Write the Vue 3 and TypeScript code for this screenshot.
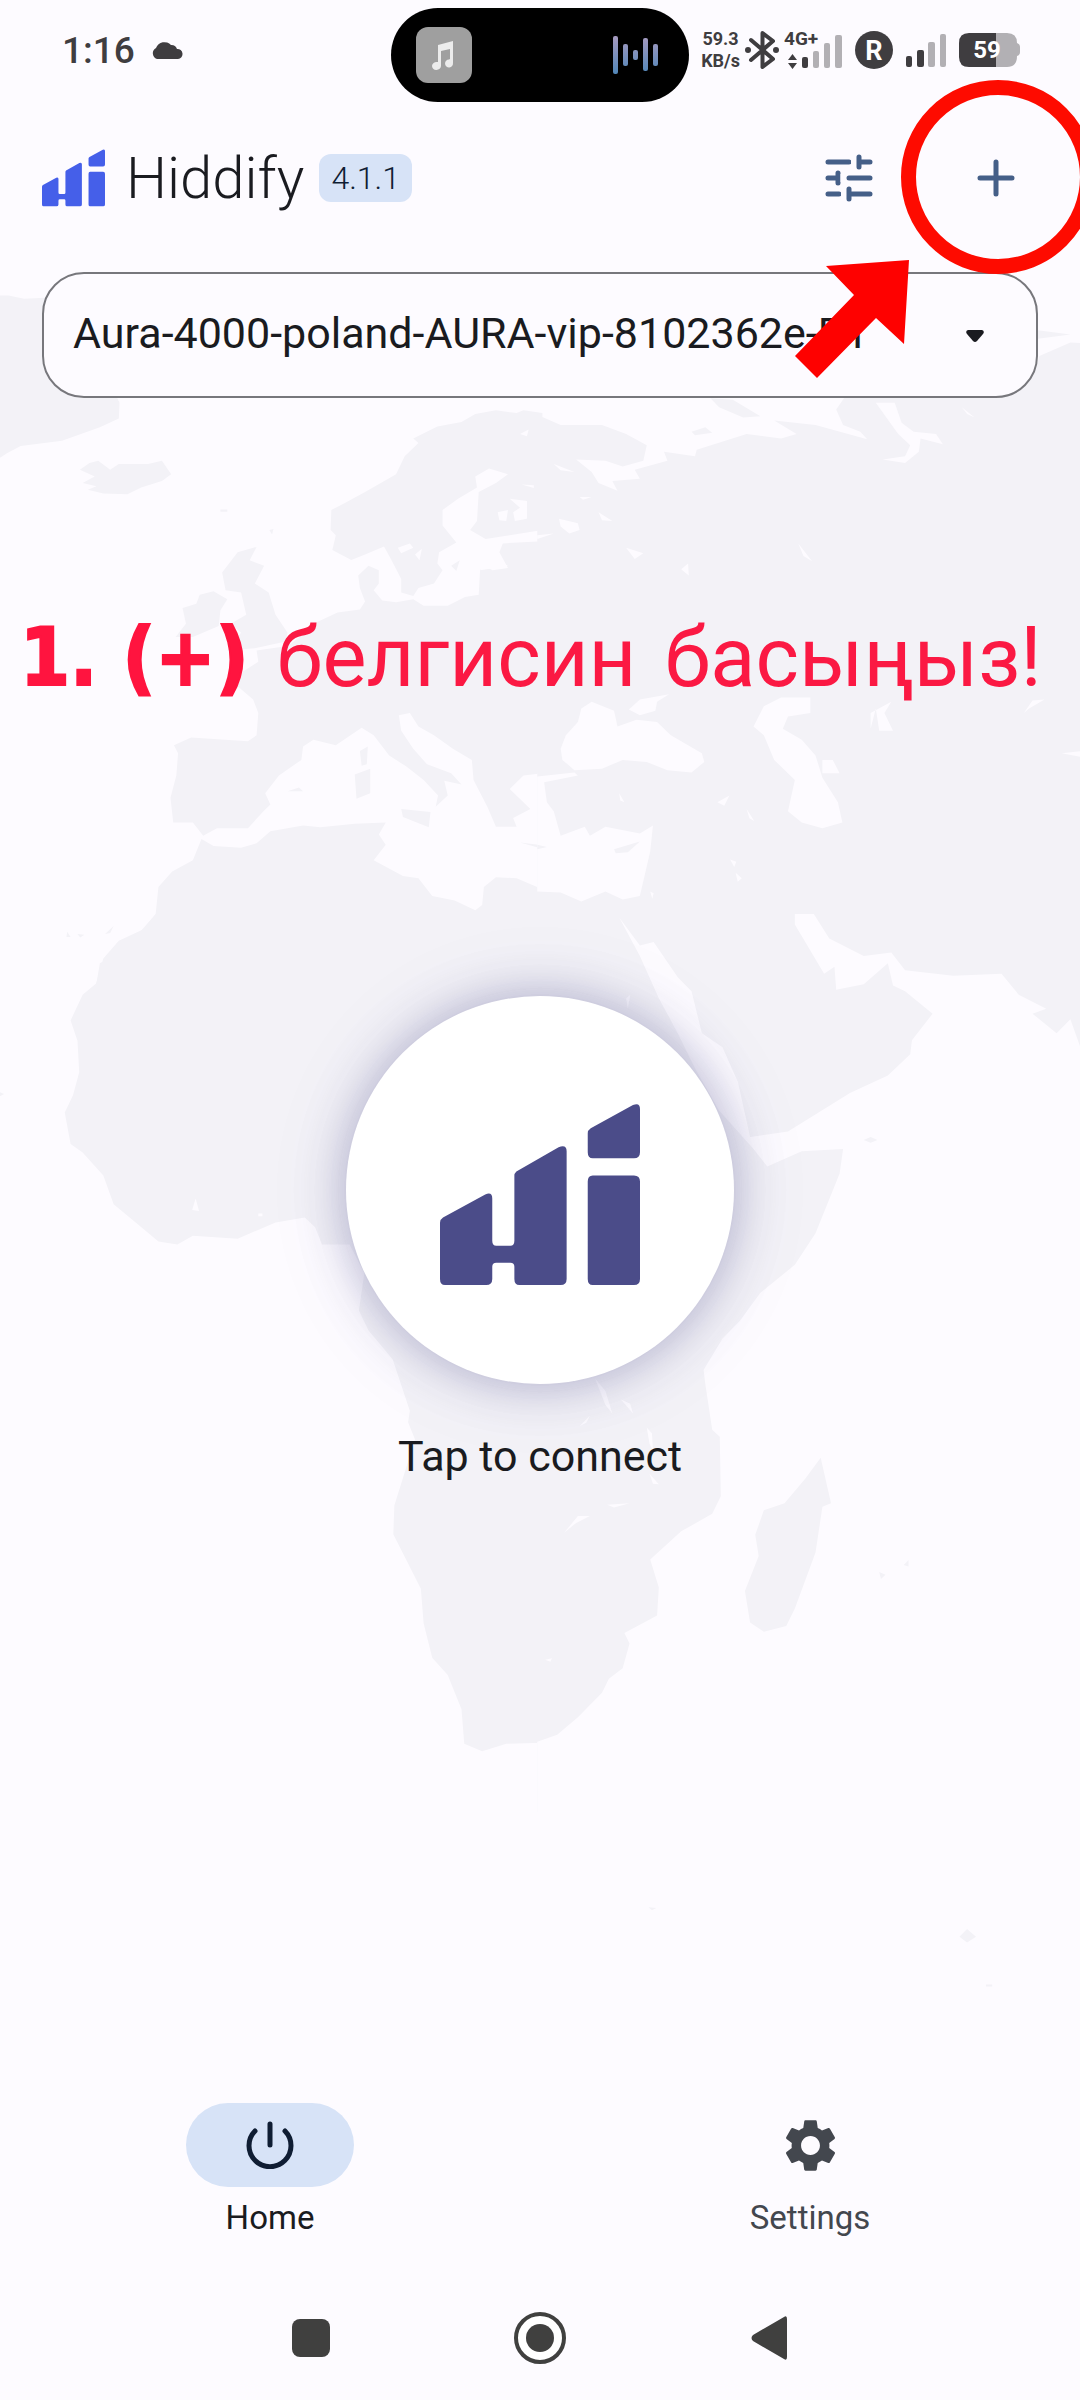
<script setup lang="ts">
import { ref } from 'vue'

interface Tab {
  id: string
  label: string
}

const tabs: Tab[] = [
  { id: 'home', label: 'Home' },
  { id: 'settings', label: 'Settings' },
]
const active = ref<string>('home')
const profiles: string[] = ['Aura-4000-poland-AURA-vip-8102362e-PT']
const profile = ref<string>(profiles[0])

const logoPath =
  'M0 118 Q0 115 3 113 L45 90 Q52 87 52 94 V136 Q52 141 56 141 H70 Q74 141 74 136 V71 Q74 69 76 67 L118 43 Q126 40 126 47 V174 Q126 180 120 180 H79 Q74 180 74 174 V162 Q74 158 70 158 H56 Q52 158 52 162 V174 Q52 180 46 180 H5 Q0 180 0 174 Z M147 29 Q147 26 150 24 L192 1 Q199 -2 199 5 V48 Q199 54 193 54 H152 Q147 54 147 48 Z M152 71 H193 Q199 71 199 77 V174 Q199 180 193 180 H152 Q147 180 147 174 V77 Q147 71 152 71 Z'
</script>

<template>
  <div class="app">
    <svg class="map" viewBox="0 0 1080 2400" aria-hidden="true">
      <!-- north-west: Greenland, western Europe, Maghreb -->
      <g transform="translate(0 280) scale(0.3444 0.4464)">
        <path class="land" d="M0 35 L25 35 L70 42 L130 40 L300 200 L347 275 L345 310 L290 330 L180 360 L60 372 L20 388 L0 398 Z" />
        <path class="land" d="M232 425 L260 410 L285 405 L320 425 L345 412 L430 412 L470 405 L497 435 L470 450 L410 465 L370 480 L300 478 L255 470 L280 462 L240 455 L275 440 Z" />
        <path class="land" d="M1575 298 L1520 292 L1500 298 L1440 292 L1380 300 L1340 318 L1270 328 L1200 355 L1215 365 L1175 395 L1150 435 L1060 475 L1000 500 L962 515 L960 560 L975 572 L965 605 L1020 627 L1060 615 L1115 597 L1135 625 L1165 670 L1165 700 L1200 708 L1215 690 L1260 680 L1285 650 L1270 635 L1275 610 L1325 588 L1285 550 L1285 515 L1330 490 L1385 465 L1380 440 L1420 422 L1475 435 L1440 455 L1390 475 L1385 540 L1365 560 L1410 580 L1480 572 L1575 560 Z" />
        <path class="land" d="M1575 585 L1460 590 L1450 610 L1475 645 L1430 650 L1395 635 L1390 705 L1350 710 L1300 730 L1230 730 L1200 715 L1150 722 L1110 718 L1085 695 L1100 680 L1100 650 L1070 640 L1040 662 L1045 690 L1060 720 L1045 738 L980 745 L910 770 L870 800 L835 820 L745 830 L750 855 L700 880 L690 910 L735 940 L750 970 L745 1020 L720 1033 L555 1025 L505 1042 L517 1060 L512 1110 L495 1160 L503 1215 L560 1215 L590 1245 L630 1228 L720 1228 L765 1190 L785 1175 L770 1150 L810 1110 L875 1075 L880 1045 L910 1030 L975 1042 L1050 1003 L1085 1020 L1130 1065 L1180 1090 L1230 1120 L1272 1155 L1265 1180 L1300 1155 L1290 1122 L1340 1130 L1310 1105 L1240 1085 L1200 1050 L1165 1010 L1158 975 L1190 970 L1215 1000 L1260 1020 L1315 1050 L1370 1075 L1375 1120 L1415 1180 L1440 1225 L1500 1225 L1490 1205 L1540 1185 L1480 1140 L1520 1110 L1575 1105 Z" />
        <path class="land" d="M645 655 L690 610 L745 598 L725 628 L767 640 L740 680 L780 700 L800 750 L835 790 L830 810 L740 825 L660 830 L700 790 L670 770 L715 750 L700 700 L655 695 Z" />
        <path class="land" d="M530 735 L570 725 L580 705 L620 697 L660 715 L640 740 L635 775 L560 800 L510 800 L540 770 Z" />
        <path class="land" d="M1045 1055 L1068 1045 L1065 1085 L1050 1088 Z M1030 1108 L1075 1095 L1075 1150 L1035 1162 Z M1165 1185 L1250 1192 L1245 1226 L1170 1203 Z M1510 1260 L1575 1266 L1575 1274 Z" />
        <path class="land" d="M585 1252 L620 1268 L700 1272 L745 1262 L785 1235 L880 1222 L930 1226 L1030 1218 L1120 1215 L1100 1242 L1120 1265 L1085 1300 L1170 1335 L1215 1340 L1255 1380 L1320 1390 L1380 1412 L1400 1400 L1405 1360 L1440 1338 L1500 1340 L1575 1365 L1575 1600 L270 1600 L300 1520 L345 1480 L415 1455 L452 1420 L460 1360 L500 1325 L560 1300 Z" />
        <path class="sea" d="M1155 600 L1190 590 L1200 600 L1165 612 Z M1205 615 L1225 602 L1218 628 Z M1510 345 L1535 335 L1530 350 Z M1445 520 L1475 515 L1470 540 L1450 538 Z M1490 520 L1510 510 L1480 490 L1530 495 L1530 535 L1495 540 Z M1515 458 L1550 460 L1550 466 Z M1380 600 L1450 590 L1420 620 L1475 640 L1395 650 Z" />
        <path class="land" d="M1310 640 L1335 628 L1325 652 Z M640 514 h20 v5 h-20 Z M782 560 l12 -2 l-4 12 Z M835 1145 h45 l-12 -8 Z M195 1460 l10 12 h-12 Z M225 1465 l20 2 l-12 6 Z M305 1465 l25 -18 l-10 16 Z" />
      </g>
      <!-- north-east: Russia, Middle East, Central Asia -->
      <g transform="translate(540 280) scale(0.3444 0.4464)">
        <path class="land" d="M-8 302 L60 325 L180 325 L250 345 L310 370 L300 405 L240 418 L190 405 L105 402 L150 430 L170 455 L225 472 L210 450 L290 445 L275 425 L370 405 L360 385 L450 395 L455 380 L600 345 L700 355 L745 345 L680 315 L800 325 L950 357 L930 340 L880 325 L860 290 L885 262 L890 200 L1440 200 L1450 170 L1540 140 L1580 142 L1580 1420 L-8 1420 Z M495 265 L560 268 L640 305 L590 308 L520 285 Z M440 340 L480 330 L500 342 L450 348 Z M1440 112 L1540 122 L1440 132 Z" />
        <path class="sea" d="M975 275 L1040 345 L1075 370 L1060 395 L995 402 L1060 410 L1100 385 L1105 355 L1170 368 L1150 345 L1085 340 L1050 320 L1030 275 Z M1225 285 L1262 308 L1240 300 Z" />
        <path class="sea" d="M60 1050 L75 1020 L110 990 L120 960 L150 945 L215 965 L225 1000 L280 985 L340 990 L380 1020 L470 1060 L477 1080 L440 1103 L370 1098 L310 1080 L240 1075 L180 1095 L100 1098 L65 1075 Z M258 962 L290 940 L375 928 L340 945 L335 965 L290 975 Z" />
        <path class="sea" d="M620 1000 L650 955 L700 935 L785 935 L785 970 L720 978 L705 1005 L760 1030 L800 1065 L820 1115 L865 1170 L878 1215 L820 1228 L760 1215 L720 1190 L740 1120 L680 1075 L650 1020 Z M820 1075 L850 1075 L870 1105 L820 1105 Z M960 970 L1020 945 L1000 970 L1025 1010 L985 1010 L975 960 L960 1005 Z M1405 970 L1430 942 L1465 940 L1420 960 Z M1515 1060 L1580 1055 L1580 1070 Z" />
        <path class="sea" d="M-8 1112 L100 1103 L110 1110 L12 1125 L20 1170 L40 1190 L60 1245 L130 1225 L145 1245 L190 1225 L290 1240 L328 1222 L320 1280 L290 1380 L240 1388 L190 1370 L120 1392 L60 1372 L-8 1370 Z" />
        <path class="land" d="M215 1275 L290 1258 L255 1282 L220 1284 Z M-8 1265 L20 1270 L-8 1275 Z" />
        <path class="sea" d="M55 535 L110 545 L115 560 L85 568 L60 552 Z M170 520 L210 540 L180 538 Z M250 600 L300 612 L275 625 Z M750 590 L790 630 L765 618 Z M410 648 L430 635 L432 662 Z M40 412 L100 430 L60 426 Z M-8 572 L40 568 L-8 580 Z M230 1150 l15 20 l-12 -4 Z M515 1170 L550 1155 L535 1178 Z M600 1185 L622 1212 L608 1206 Z M552 1298 l18 5 l-6 12 Z M568 1328 l18 12 l-12 8 Z M320 1370 l10 4 l-4 12 Z M115 486 l35 0 l-25 6 Z" />
      </g>
      <!-- south-west: western and southern Africa -->
      <g transform="translate(0 900) scale(0.3444 0.574)">
        <path class="land" d="M452 25 L400 60 L340 75 L320 100 L290 110 L280 145 L240 165 L205 210 L225 245 L230 300 L212 340 L188 370 L205 425 L240 440 L300 480 L330 530 L400 565 L460 595 L515 600 L560 585 L690 590 L800 562 L885 553 L915 570 L935 600 L1015 600 L1058 650 L1042 715 L1070 750 L1140 800 L1190 890 L1185 910 L1205 940 L1145 1055 L1142 1105 L1222 1200 L1230 1260 L1255 1320 L1300 1350 L1340 1410 L1348 1470 L1400 1483 L1470 1470 L1575 1468 L1575 25 Z M0 335 L12 338 L0 342 Z" />
        <path class="sea" d="M558 540 L568 520 L578 542 Z M750 546 h12 v5 h-12 Z" />
      </g>
      <!-- south-east: Horn of Africa, Arabian Sea, Madagascar -->
      <g transform="translate(540 900) scale(0.3444 0.7015)">
        <path class="land" d="M-8 15 H1580 V1300 H-8 Z" />
        <path class="sea" d="M230 25 L290 65 L330 60 L400 110 L440 130 L470 190 L530 210 L575 260 L610 338 L720 330 L900 275 L1010 250 L1075 220 L1080 200 L1140 162 L1060 130 L1025 122 L1010 90 L940 120 L860 128 L855 95 L825 105 L740 35 L740 20 L795 20 L840 55 L940 80 L1020 75 L1060 100 L1200 108 L1340 105 L1390 135 L1470 155 L1430 162 L1500 190 L1540 170 L1580 225 L1580 1320 L-8 1320 L-8 1200 L50 1190 L110 1165 L180 1130 L200 1110 L240 1095 L260 1060 L245 1045 L340 1020 L345 980 L320 940 L410 900 L500 875 L525 850 L522 765 L500 755 L480 690 L475 670 L530 625 L580 600 L640 560 L740 520 L800 475 L870 390 L880 355 L760 358 L660 380 L620 355 L520 300 L450 240 L400 190 L345 140 L290 80 Z" />
        <path class="land" d="M815 795 L845 860 L820 865 L800 930 L740 1010 L715 1035 L650 1043 L610 1030 L595 985 L635 935 L625 905 L650 870 L710 860 L770 825 Z M940 342 L960 338 L980 342 L960 346 Z M985 958 L1003 962 L990 968 Z M1056 948 L1070 941 L1070 950 Z M1218 1478 L1240 1467 L1266 1478 L1240 1486 Z M315 1436 L338 1437 L325 1440 Z M1295 1546 h18 v3 h-18 Z" />
        <path class="sea" d="M160 682 L190 700 L210 732 L190 720 Z M235 712 L262 718 L270 732 Z M115 750 L145 735 L135 745 Z M310 752 L325 760 L328 785 L318 775 Z M318 818 L345 833 L328 832 Z M195 862 L260 860 L215 866 Z M70 902 L110 878 L145 878 L105 888 Z M15 1083 L35 1081 L30 1086 Z M250 140 L262 135 L255 155 Z" />
      </g>
    </svg>

    <header class="status">
      <div class="status-left">
        <span class="time">1:16</span>
        <svg width="32" height="18" viewBox="0 0 32 18" aria-hidden="true">
          <path fill="#3f3d40" d="M6 18 A6 6 0 0 1 5 7 A9 9 0 0 1 20 4 A6 6 0 0 1 26 8 A5 5 0 0 1 27 18 Z" />
        </svg>
      </div>
      <div class="island">
        <svg width="56" height="56" viewBox="0 0 56 56" aria-hidden="true">
          <rect width="56" height="56" rx="12" fill="#9f9f9f" />
          <path fill="#ececec" d="M22 18 L37 14 V36 A4 4 0 1 1 33 32.500 L34 32 V22 L25 24 V39 A4.500 4 0 1 1 21 35 L22 35 Z" />
        </svg>
        <svg width="46" height="40" viewBox="0 0 46 40" aria-hidden="true">
          <defs>
            <linearGradient id="wave" gradientUnits="userSpaceOnUse" x1="0" y1="0" x2="0" y2="40">
              <stop offset="0" stop-color="#a99bc0" />
              <stop offset="1" stop-color="#4f86b8" />
            </linearGradient>
          </defs>
          <g fill="url(#wave)">
            <rect x="0" y="1" width="5" height="38" rx="2" />
            <rect x="10" y="9" width="5" height="22" rx="2" />
            <rect x="20" y="15" width="5" height="10" rx="2" />
            <rect x="30" y="3" width="5" height="33" rx="2" />
            <rect x="40" y="9" width="5" height="22" rx="2" />
          </g>
        </svg>
      </div>
      <div class="status-right">
        <div class="network">
          <span class="speed">59.3<br />KB/s</span>
          <svg width="34" height="38" viewBox="0 0 34 38" aria-hidden="true">
            <path d="M6 9 L28 28 L17.500 36 V2 L28 10 L6 29" fill="none" stroke="#3f3d40" stroke-width="4" stroke-linejoin="round" stroke-linecap="round" />
            <circle cx="3" cy="19" r="3" fill="#3f3d40" />
            <circle cx="31" cy="19" r="3" fill="#3f3d40" />
          </svg>
          <svg width="58" height="52" viewBox="0 -8 58 52" aria-hidden="true">
            <text x="0" y="13" class="glyph" font-size="19" fill="#3f3d40">4G+</text>
            <path fill="#3f3d40" d="M4 28 L8.500 22 L13 28 Z M4 31 H13 L8.500 37 Z" />
            <rect x="18" y="25" width="6" height="11" rx="2" fill="#3f3d40" />
            <g fill="#b2b0b4">
              <rect x="29" y="19" width="6" height="17" rx="2" />
              <rect x="40" y="11" width="6" height="25" rx="2" />
              <rect x="51" y="3" width="7" height="33" rx="2" />
            </g>
          </svg>
        </div>
        <svg width="38" height="38" viewBox="0 0 38 38" aria-hidden="true">
          <circle cx="19" cy="19" r="19" fill="#3f3d40" />
          <text x="19" y="29" text-anchor="middle" class="glyph" font-size="27" fill="#fff">R</text>
        </svg>
        <svg width="40" height="34" viewBox="0 0 40 34" aria-hidden="true">
          <g fill="#3f3d40">
            <rect x="0" y="23" width="6" height="11" rx="2" />
            <rect x="11" y="17" width="7" height="17" rx="2" />
          </g>
          <g fill="#b2b0b4">
            <rect x="22" y="9" width="7" height="25" rx="2" />
            <rect x="34" y="1" width="6" height="33" rx="2" />
          </g>
        </svg>
        <svg width="61" height="34" viewBox="0 0 61 34" aria-hidden="true">
          <path fill="#b2b0b4" d="M37 0 H48 Q58 0 58 10 Q61 11 61 14 V19 Q61 22 58 23 Q58 34 48 34 H37 Z" />
          <path fill="#3f3d40" d="M10 0 H37 V34 H10 Q0 34 0 24 V10 Q0 0 10 0 Z" />
          <text x="28" y="25" text-anchor="middle" class="glyph" font-size="24" fill="#fff">59</text>
        </svg>
      </div>
    </header>

    <div class="toolbar">
      <svg class="brand" viewBox="0 0 199 181" aria-hidden="true">
        <path :d="logoPath" fill="#455fe9" />
      </svg>
      <h1 class="title">Hiddify</h1>
      <span class="version">4.1.1</span>
      <div class="actions">
        <button class="icon-button" type="button" aria-label="Quick settings">
          <svg width="48" height="48" viewBox="0 0 48 48" fill="none" stroke="#455f88" stroke-width="5" stroke-linecap="round">
            <path d="M3 8 H24 M3 24 H13 M3 40 H14 M24 24 H45 M24 40 H45 M35 8 H45 M34 3 V13 M13 19 V29 M24 35 V45" />
            <path stroke="#fdfbff" stroke-width="4" stroke-linecap="butt" d="M28 4 V12 M18 36 V44" />
            <path stroke="#fdfbff" stroke-width="5" stroke-linecap="butt" d="M18 20 V28" />
          </svg>
        </button>
        <button class="icon-button" type="button" aria-label="Add profile">
          <svg width="38" height="38" viewBox="0 0 38 38" fill="none" stroke="#455f88" stroke-width="5" stroke-linecap="round">
            <path d="M3 19 H35 M19 3 V35" />
          </svg>
          <span class="ring"></span>
          <svg class="pointer" width="114" height="118" viewBox="0 0 114 118" aria-hidden="true">
            <path fill="#fe0100" d="M31 6 L114 0 L109 84 L81 58 L22 118 L0 96 L59 35 Z" />
          </svg>
        </button>
      </div>
    </div>

    <main class="content">
      <div class="picker">
        <select v-model="profile" class="profile" aria-label="Profile">
          <option v-for="name in profiles" :key="name" :value="name">{{ name }}</option>
        </select>
        <svg class="caret" width="18" height="12" viewBox="0 0 18 12" aria-hidden="true">
          <path fill="#1a1b20" d="M2 0 H16 Q19 1 17 4 L11 11 Q9 13 7 11 L1 4 Q-1 1 2 0 Z" />
        </svg>
      </div>

      <p class="hint"><b>1. (+)</b><span>белгисин</span><span>басыңыз!</span></p>

      <button class="connect" type="button" aria-labelledby="connect-label">
        <svg width="200" height="182" viewBox="0 0 199 181" aria-hidden="true">
          <path :d="logoPath" fill="#4b4c89" />
        </svg>
      </button>
      <p id="connect-label" class="connect-label">Tap to connect</p>
    </main>

    <nav class="tabs">
      <button
        v-for="tab in tabs"
        :key="tab.id"
        type="button"
        class="tab"
        :class="{ active: active === tab.id }"
        @click="active = tab.id"
      >
        <span class="pill">
          <svg v-if="tab.id === 'home'" width="48" height="48" viewBox="0 0 48 48" fill="none" stroke="#0f1d33" stroke-width="5" stroke-linecap="round">
            <path d="M24 3 V24 M9 10 A21 21 0 1 0 39 10" />
          </svg>
          <svg v-else width="63" height="63" viewBox="0 0 24 24" fill="#43474e">
            <path d="M19.140 12.940c.04-.3.06-.61.06-.94 0-.32-.02-.64-.07-.94l2.030-1.580c.18-.14.23-.41.12-.61l-1.920-3.320c-.12-.22-.37-.29-.59-.22l-2.390.96c-.5-.38-1.030-.7-1.620-.94l-.36-2.540c-.04-.24-.24-.41-.48-.41h-3.840c-.24 0-.43.17-.47.41l-.36 2.540c-.59.24-1.130.57-1.620.94l-2.390-.96c-.22-.08-.47 0-.59.22L2.740 8.870c-.12.21-.08.47.12.61l2.030 1.580c-.05.3-.09.63-.09.94s.02.64.07.94l-2.030 1.580c-.18.14-.23.41-.12.61l1.920 3.320c.12.22.37.29.59.22l2.390-.96c.5.38 1.030.7 1.620.94l.36 2.540c.05.24.24.41.48.41h3.840c.24 0 .44-.17.47-.41l.36-2.540c.59-.24 1.130-.56 1.620-.94l2.390.96c.22.08.47 0 .59-.22l1.920-3.320c.12-.22.07-.47-.12-.61l-2.010-1.580zM12 15.600c-1.980 0-3.600-1.620-3.600-3.600s1.620-3.600 3.600-3.600 3.600 1.620 3.600 3.600-1.620 3.600-3.600 3.600z" />
          </svg>
        </span>
        <span>{{ tab.label }}</span>
      </button>
    </nav>

    <div class="system">
      <button type="button" class="key" aria-label="Recent apps">
        <svg width="38" height="38" viewBox="0 0 38 38"><rect width="38" height="38" rx="8" fill="#40403f" /></svg>
      </button>
      <button type="button" class="key" aria-label="Home screen">
        <svg width="52" height="52" viewBox="0 0 52 52">
          <circle cx="26" cy="26" r="24" fill="#fff" stroke="#40403f" stroke-width="4" />
          <circle cx="26" cy="26" r="14" fill="#40403f" />
        </svg>
      </button>
      <button type="button" class="key" aria-label="Back">
        <svg width="36" height="44" viewBox="0 0 36 44"><path fill="#40403f" d="M33 1 Q36 -1 36 3 V41 Q36 45 33 43 L2 25 Q-1 22 2 19 Z" /></svg>
      </button>
    </div>
  </div>
</template>

<style>
body {
  background: #fdfbff;
}
</style>

<style scoped>
.app {
  position: relative;
  display: flex;
  flex-direction: column;
  min-height: 100vh;
  overflow: hidden;
  background: #fdfbff;
  color: #1a1b20;
  font-family: Roboto, 'Noto Sans', sans-serif;
}
.app svg {
  display: block;
  flex: none;
}
button {
  padding: 0;
  border: 0;
  background: none;
  color: inherit;
  font: inherit;
}
p,
h1 {
  margin: 0;
}
.app .map {
  position: absolute;
  top: 0;
  left: 0;
  width: 100%;
}
.land {
  fill: #f3f2f7;
}
.sea {
  fill: #fdfbff;
}
.glyph {
  font-family: Roboto, sans-serif;
  font-weight: 700;
}

.status {
  position: relative;
  display: flex;
  align-items: center;
  justify-content: space-between;
  box-sizing: border-box;
  height: 110px;
  padding: 0 60px 10px 62px;
  color: #3f3d40;
}
.status-left,
.status-right,
.network {
  display: flex;
  align-items: center;
}
.status-left {
  gap: 16px;
}
.status-right {
  gap: 13px;
}
.network {
  gap: 5px;
}
.time {
  font-size: 37px;
  font-weight: 500;
}
.speed {
  font-size: 18px;
  font-weight: 700;
  line-height: 22px;
  text-align: center;
}
.island {
  position: absolute;
  top: 8px;
  left: 50%;
  display: flex;
  align-items: center;
  justify-content: space-between;
  box-sizing: border-box;
  width: 298px;
  height: 94px;
  padding: 0 30px 0 25px;
  margin-left: -149px;
  border-radius: 47px;
  background: #000;
}

.toolbar {
  position: relative;
  z-index: 1;
  display: flex;
  align-items: center;
  box-sizing: border-box;
  height: 134px;
  padding: 2px 36px 0 42px;
}
.brand {
  width: 63px;
  height: 58px;
}
.title {
  margin-left: 21px;
  font-size: 58px;
  font-weight: 300;
}
.version {
  margin-left: 15px;
  padding: 0 12px;
  border-radius: 12px;
  background: #d7e3f7;
  color: #0f1d33;
  font-size: 32px;
  font-weight: 300;
  line-height: 48px;
}
.actions {
  display: flex;
  gap: 51px;
  margin-left: auto;
}
.icon-button {
  position: relative;
  display: flex;
  align-items: center;
  justify-content: center;
  width: 96px;
  height: 96px;
}
.ring {
  position: absolute;
  top: 50%;
  left: 50%;
  box-sizing: border-box;
  width: 194px;
  height: 194px;
  margin: -98px 0 0 -95px;
  border: 15px solid #fe0b00;
  border-radius: 50%;
}
.pointer {
  position: absolute;
  top: 130px;
  right: 135px;
}

.content {
  position: relative;
  display: flex;
  flex: 1;
  flex-direction: column;
  align-items: center;
  padding: 28px 42px;
}
.picker {
  position: relative;
  width: 100%;
}
.profile {
  display: block;
  box-sizing: border-box;
  width: 100%;
  height: 126px;
  padding: 0 100px 4px 29px;
  border: 2px solid #77777c;
  border-radius: 42px;
  appearance: none;
  background: #fdfbff;
  color: #1a1b20;
  font-family: Roboto, 'Noto Sans', sans-serif;
  font-size: 43px;
}
.caret {
  position: absolute;
  top: 58px;
  right: 54px;
}
.hint {
  display: flex;
  align-self: flex-start;
  gap: 28px;
  margin: 210px -40px 0 -22px;
  color: #fb1943;
  font-size: 83px;
  line-height: 100px;
  white-space: nowrap;
}
.hint b {
  color: #ff143f;
  font-family: 'DejaVu Sans Condensed', 'DejaVu Sans', sans-serif;
  font-size: 80px;
  font-weight: 700;
  -webkit-text-stroke: 2px #ff143f;
}
.connect {
  display: flex;
  align-items: center;
  justify-content: center;
  width: 388px;
  height: 388px;
  margin-top: 288px;
  padding-top: 10px;
  border-radius: 50%;
  background: #fff;
  box-shadow: 0 0 48px rgba(75, 76, 137, 0.4), 0 0 96px rgba(75, 76, 137, 0.07);
}
.connect-label {
  margin-top: 42px;
  font-size: 43px;
  line-height: 60px;
}

.tabs {
  position: relative;
  display: flex;
  padding: 35px 0 38px;
}
.tab {
  display: flex;
  flex: 1;
  flex-direction: column;
  align-items: center;
  gap: 11px;
  color: #43474e;
  font-size: 33px;
  line-height: 40px;
}
.pill {
  display: flex;
  align-items: center;
  justify-content: center;
  width: 168px;
  height: 84px;
  border-radius: 42px;
}
.active {
  color: #1a1b20;
}
.active .pill {
  background: #d7e3f7;
}
.system {
  position: relative;
  display: flex;
  justify-content: center;
  gap: 153px;
  height: 124px;
}
.key {
  display: flex;
  align-items: center;
  justify-content: center;
  width: 76px;
}
</style>
